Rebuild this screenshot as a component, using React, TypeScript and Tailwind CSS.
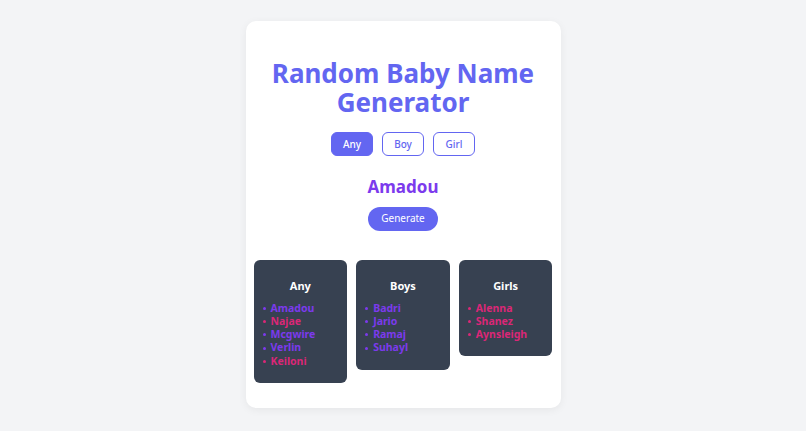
import { useState } from "react";

type Gender = "any" | "boy" | "girl";

const lists: { title: string; names: { n: string; g: "b" | "g" }[] }[] = [
  {
    title: "Any",
    names: [
      { n: "Amadou", g: "b" },
      { n: "Najae", g: "g" },
      { n: "Mcgwire", g: "b" },
      { n: "Verlin", g: "b" },
      { n: "Keiloni", g: "g" },
    ],
  },
  {
    title: "Boys",
    names: [
      { n: "Badri", g: "b" },
      { n: "Jario", g: "b" },
      { n: "Ramaj", g: "b" },
      { n: "Suhayl", g: "b" },
    ],
  },
  {
    title: "Girls",
    names: [
      { n: "Alenna", g: "g" },
      { n: "Shanez", g: "g" },
      { n: "Aynsleigh", g: "g" },
    ],
  },
];

export default function App() {
  const [gender, setGender] = useState<Gender>("any");
  const options: { key: Gender; label: string }[] = [
    { key: "any", label: "Any" },
    { key: "boy", label: "Boy" },
    { key: "girl", label: "Girl" },
  ];

  return (
    <div
      className="min-h-screen bg-[#f3f4f6] flex justify-center pt-[21px]"
      style={{ fontFamily: '"Noto Sans", "Open Sans", sans-serif' }}
    >
      <div className="w-[315px] h-[387px] bg-white rounded-[10px] shadow-[0_2px_8px_rgba(0,0,0,0.06)] px-2 pt-[38px] pb-[25px] flex flex-col items-center">
        <h1 className="text-[26px] leading-[29px] font-bold text-[#6366f1] text-center">
          Random Baby Name
          <br />
          Generator
        </h1>

        <div className="flex gap-[9px] mt-[15px]">
          {options.map((o) => (
            <button
              key={o.key}
              onClick={() => setGender(o.key)}
              className={`h-6 w-[42px] rounded-md text-[10px] font-medium border ${
                gender === o.key
                  ? "bg-[#6366f1] border-[#6366f1] text-white"
                  : "bg-white border-[#6366f1] text-[#6366f1]"
              }`}
            >
              {o.label}
            </button>
          ))}
        </div>

        <div className="mt-[18px] h-[26px] leading-[26px] text-[17px] font-bold text-[#7c3aed]">
          Amadou
        </div>

        <button className="mt-[7px] h-6 w-[70px] rounded-full bg-[#6366f1] text-white text-[10px]">
          Generate
        </button>

        <div className="mt-[29px] w-full grid grid-cols-3 gap-[9px] items-start">
          {lists.map((l) => (
            <div key={l.title} className="bg-[#374151] rounded-md pt-[18px] pb-[15px] px-[8px]">
              <h3 className="text-center text-white text-[11px] leading-4 font-bold">
                {l.title}
              </h3>
              <ul className="mt-[8px]">
                {l.names.map((x) => (
                  <li
                    key={x.n}
                    className={`flex items-center text-[10.5px] leading-[13.3px] font-bold ${
                      x.g === "b" ? "text-[#7c3aed]" : "text-[#db2777]"
                    }`}
                  >
                    <span className="w-[3px] h-[3px] rounded-full bg-current ml-[1px] mr-[5px]" />
                    {x.n}
                  </li>
                ))}
              </ul>
            </div>
          ))}
        </div>
      </div>
    </div>
  );
}
